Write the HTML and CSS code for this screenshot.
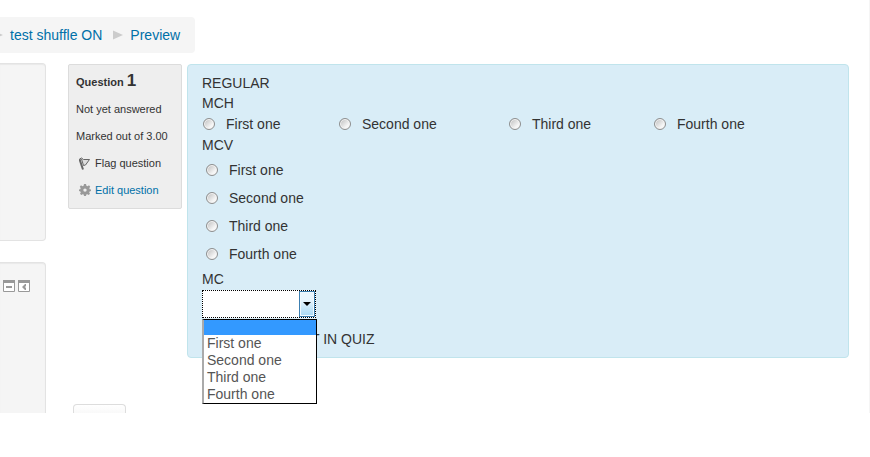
FILE: index.html
```html
<!DOCTYPE html>
<html lang="en">
<head>
    <meta charset="UTF-8">
    <meta name="viewport" content="width=device-width, initial-scale=1.0">
    <title>test shuffle ON - Preview</title>
    <link rel="stylesheet" href="styles.css">
</head>
<body>
    <div class="page">
        <nav class="breadcrumb" aria-label="Breadcrumb">
            <svg class="separator first" viewBox="0 0 10 10" aria-hidden="true"><path d="M0 0.5L10 5L0 9.5Z"/></svg>
            <a href="#">test shuffle ON</a>
            <svg class="separator" viewBox="0 0 10 10" aria-hidden="true"><path d="M0 0.5L10 5L0 9.5Z"/></svg>
            <a href="#">Preview</a>
        </nav>

        <div class="columns">
            <aside class="sidebar">
                <div class="block"></div>
                <div class="block block-last">
                    <button class="block-action" type="button" aria-label="Hide block">
                        <svg viewBox="0 0 12 12"><path class="frame" d="M0.5 0.5H11.5V11.5H0.5Z"/><path class="bar" d="M0 0H12V3H0ZM3 6H9V8H3Z"/></svg>
                    </button>
                    <button class="block-action" type="button" aria-label="Dock block">
                        <svg viewBox="0 0 12 12"><path class="frame" d="M0.5 0.5H11.5V11.5H0.5Z"/><path class="bar" d="M0 0H12V3H0ZM4 7L7 4H8V6L7 7L8 8V10H7Z"/></svg>
                    </button>
                </div>
            </aside>

            <main class="content">
                <div class="question">
                    <div class="info">
                        <h3>Question <span class="number">1</span></h3>
                        <div class="info-row">Not yet answered</div>
                        <div class="info-row">Marked out of 3.00</div>
                        <div class="info-row info-link">
                            <svg viewBox="0 0 12 14" aria-hidden="true"><path class="flag" d="M0.5 3L4 13.5"/><path class="flag-cloth" d="M0.5 3L2.5 2L4.5 3.5L10.5 3.5L6.5 9L4.5 9.5L2.5 3"/></svg>
                            <span>Flag question</span>
                        </div>
                        <div class="info-row info-link">
                            <svg viewBox="0 0 12 14" aria-hidden="true"><path class="gear" fill-rule="evenodd" d="M5 1H7L7.4 2.7L8.6 3.2L10 2.3L11.2 3.8L10.3 5.1L10.7 6.2L12 6.5V8L10.6 8.4L10.2 9.4L11 10.8L9.7 12L8.4 11.2L7.3 11.6L7 13H5L4.7 11.6L3.6 11.2L2.3 12L1 10.8L1.8 9.4L1.4 8.4L0 8V6.5L1.3 6.2L1.7 5.1L0.8 3.8L2 2.3L3.4 3.2L4.6 2.7ZM6 5.4A1.7 1.7 0 1 0 6 8.8A1.7 1.7 0 1 0 6 5.4Z"/></svg>
                            <a href="#">Edit question</a>
                        </div>
                    </div>

                    <form class="formulation">
                        <div>REGULAR</div>
                        <div>MCH</div>
                        <div class="answers-horizontal">
                            <label><input type="radio" name="mch">First one</label>
                            <label><input type="radio" name="mch">Second one</label>
                            <label><input type="radio" name="mch">Third one</label>
                            <label><input type="radio" name="mch">Fourth one</label>
                        </div>
                        <div>MCV</div>
                        <div class="answers-vertical">
                            <label><input type="radio" name="mcv">First one</label>
                            <label><input type="radio" name="mcv">Second one</label>
                            <label><input type="radio" name="mcv">Third one</label>
                            <label><input type="radio" name="mcv">Fourth one</label>
                        </div>
                        <label class="select-label" for="mc">MC</label>
                        <div class="select-wrap">
                            <select id="mc">
                                <option></option>
                            </select>
                            <span class="arrow"></span>
                            <ul class="options" role="listbox" aria-label="MC">
                                <li class="selected" role="option" aria-selected="true" aria-label="Empty"></li>
                                <li role="option">First one</li>
                                <li role="option">Second one</li>
                                <li role="option">Third one</li>
                                <li role="option">Fourth one</li>
                            </ul>
                        </div>
                        <p class="closing">T IN QUIZ</p>
                    </form>
                </div>
                <div class="nav-buttons">
                    <button class="next" type="button" aria-label="Next"></button>
                </div>
            </main>
        </div>
    </div>
</body>
</html>
```
FILE: styles.css
```css
/* General Styling */
* {
    box-sizing: border-box;
}

body {
    margin: 0;
    background-color: #fff;
    color: #333;
    font-family: "Liberation Sans", Arial, sans-serif;
    font-size: 14px;
    line-height: 20px;
}

a {
    color: #0070a8;
    text-decoration: none;
}

a:hover {
    text-decoration: underline;
}

.page {
    padding-top: 17px;
    border-right: 1px solid #f5f5f5;
}

/* Breadcrumb */
.breadcrumb {
    display: flex;
    align-items: center;
    width: fit-content;
    padding: 8px 15px 8px 0;
    background-color: #f5f5f5;
    border-radius: 0 4px 4px 0;
}

.separator {
    width: 10px;
    height: 10px;
    margin: 0 7px 0 11px;
    fill: #ccc;
}

.separator.first {
    margin-left: -7px;
}

/* Sidebar blocks */
.columns {
    display: flex;
    gap: 22px;
    margin-top: 10px;
}

.sidebar {
    display: flex;
    flex-direction: column;
    flex: 0 0 46px;
    gap: 21px;
}

.block {
    min-height: 178px;
    background-color: #f5f5f5;
    border: 1px solid #e3e3e3;
    border-left: none;
    border-radius: 0 4px 4px 0;
    box-shadow: inset 0 1px 1px rgba(0, 0, 0, 0.05);
}

.block-last {
    display: flex;
    align-items: flex-start;
    gap: 3px;
    min-height: 151px;
    padding: 17px 0 0 3px;
    border-bottom: none;
    border-radius: 0 4px 0 0;
}

.block-action {
    width: 12px;
    height: 12px;
    padding: 0;
    border: none;
    background: none;
    cursor: pointer;
}

.block-action svg {
    display: block;
}

.frame {
    fill: #fff;
    stroke: #999;
}

.bar {
    fill: #999;
}

/* Question */
.content {
    display: flex;
    flex-direction: column;
    justify-content: space-between;
    flex: 1;
    padding: 1px 20px 0 0;
}

.question {
    display: flex;
    align-items: flex-start;
    gap: 5px;
}

.info {
    display: flex;
    flex-direction: column;
    gap: 7px;
    flex: 0 0 114px;
    padding: 6px 7px 8px;
    background-color: #eee;
    border: 1px solid #dcdcdc;
    border-radius: 2px;
    font-size: 11px;
    white-space: nowrap;
}

.info h3 {
    margin: 0;
    font-size: 11px;
    line-height: 20px;
}

.number {
    font-size: 17px;
}

.info-link {
    display: flex;
    align-items: center;
    gap: 4px;
    padding-left: 3px;
}

.info-link svg {
    width: 12px;
    height: 14px;
}

.flag,
.flag-cloth {
    fill: none;
    stroke: #666;
    stroke-width: 2;
}

.flag-cloth {
    fill: #ddd;
    stroke-width: 1;
}

.gear {
    fill: #999;
}

.formulation {
    flex: 1;
    padding: 8px 14px;
    background-color: #d9edf7;
    border: 1px solid #c0e4ec;
    border-radius: 4px;
}

.answers-horizontal {
    display: grid;
    grid-template-columns: 136px 170px 145px auto;
    padding: 1px;
}

.answers-vertical {
    display: flex;
    flex-direction: column;
    padding: 1px 4px;
}

.answers-horizontal label,
.answers-vertical label {
    display: flex;
    align-items: center;
    gap: 11px;
}

.answers-vertical label {
    height: 28px;
}

input[type="radio"] {
    appearance: none;
    width: 12px;
    height: 12px;
    margin: 0;
    border: 1px solid #8e8f8f;
    border-radius: 50%;
    background: linear-gradient(135deg, #bbb, #f6f6f6 70%);
    box-shadow: inset 0 0 0 1px #f4f4f4;
}

input[type="radio"]:checked {
    background: radial-gradient(circle, #2a5a78 0, #2a5a78 3px, #fff 4px);
}

.select-label {
    display: block;
}

/* Drop-down */
.select-wrap {
    position: relative;
    width: 114px;
    margin: 1px 0;
}

select {
    appearance: none;
    display: block;
    width: 100%;
    height: 28px;
    padding: 4px;
    border: 1px dotted #000;
    border-radius: 0;
    background-color: #fff;
    color: #555;
    font: inherit;
}

.arrow {
    position: absolute;
    top: 1px;
    right: 1px;
    display: flex;
    align-items: center;
    justify-content: center;
    width: 16px;
    height: 26px;
    border: 1px solid #3c7fb1;
    background: linear-gradient(#eaf6fd 30%, #a7d9f5);
    box-shadow: inset 0 0 0 1px #eff9fe;
    pointer-events: none;
}

.arrow::after {
    content: "";
    border: 4px solid transparent;
    border-top-color: #000;
    border-bottom: none;
}

.options {
    position: absolute;
    top: 29px;
    left: 0;
    z-index: 1;
    width: 115px;
    margin: 0;
    padding: 0;
    border: 1px solid #000;
    border-left: 2px solid #aaa;
    background-color: #fff;
    color: #555;
    line-height: 17px;
    list-style: none;
}

.options li {
    padding-left: 3px;
}

.options .selected {
    height: 15px;
    background-color: #39f;
}

.closing {
    margin: 11px 0 0;
    padding-left: 109px;
}

/* Buttons */
.nav-buttons {
    padding-left: 5px;
}

.next {
    display: block;
    width: 53px;
    height: 9px;
    padding: 0;
    border: 1px solid #ddd;
    border-bottom: none;
    border-radius: 4px 4px 0 0;
    background: linear-gradient(#fff, #f9f9f9);
}
```
